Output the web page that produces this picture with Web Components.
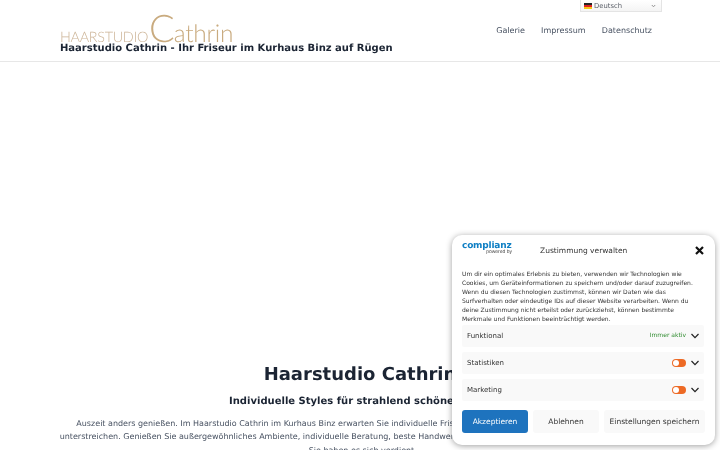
<!DOCTYPE html>
<html lang="de"><head><meta charset="utf-8"><title>Haarstudio Cathrin</title>
<style>
html,body{margin:0;padding:0;height:450px;overflow:hidden;background:#fff}
body{font-family:"DejaVu Sans",sans-serif;color:#1b2433;text-rendering:geometricPrecision}
</style></head><body>
<site-header></site-header>
<hero-section></hero-section>
<consent-banner>
  <consent-row label="Funktional" kind="always"></consent-row>
  <consent-row label="Statistiken" kind="toggle"></consent-row>
  <consent-row label="Marketing" kind="toggle"></consent-row>
</consent-banner>
<script>
function def(name,html){
  customElements.define(name,class extends HTMLElement{
    connectedCallback(){
      if(this.shadowRoot)return;
      const r=this.attachShadow({mode:'open'});
      r.innerHTML=typeof html==='function'?html(this):html;
    }
  });
}
def('site-logo',`<style>
:host{display:flex;align-items:baseline;height:29px;color:#c9ab7f;font-family:Lato,"Liberation Sans",sans-serif;font-weight:300;line-height:29px;white-space:nowrap}
.a{font-size:14.4px;letter-spacing:-.3px;color:#cdb598}
.c{font-size:38px;margin-left:1px;letter-spacing:-1px}
.b{font-size:24.5px;letter-spacing:-.3px}
</style><span class="a">HAARSTUDIO</span><span class="c">C</span><span class="b">athrin</span>`);
def('lang-switch',`<style>
:host{display:flex;align-items:center;box-sizing:border-box;width:82px;height:12px;padding:0 3px;background:linear-gradient(#fff,#f4f4f4);border:1px solid #e4e4e4;border-top:0;font-size:6.8px;color:#5a5f68;gap:2px}
svg{display:block}.s{margin-left:auto;margin-right:2px}
</style><svg width="8" height="6" viewBox="0 0 8 6"><rect width="8" height="2" fill="#222"/><rect y="2" width="8" height="2" fill="#d22"/><rect y="4" width="8" height="2" fill="#f5c518"/></svg><span>Deutsch</span><svg class="s" width="5" height="4" viewBox="0 0 5 4"><path d="M.8 1l1.7 1.8L4.2 1" fill="none" stroke="#888" stroke-width=".9"/></svg>`);
def('site-nav',`<style>
:host{display:flex;gap:16.2px;font-size:8px;line-height:11px;color:#475161;white-space:nowrap}
</style><span>Galerie</span><span>Impressum</span><span>Datenschutz</span>`);
def('site-header',`<style>
:host{display:block;box-sizing:border-box;height:62px;border-bottom:1px solid #e7e7e7;padding-left:60px;padding-right:68px;position:relative;filter:blur(.25px)}
.w{display:flex;justify-content:space-between;height:61px}
.brand{padding-top:14px}
.t{font-weight:700;font-size:10px;line-height:13px;color:#1b2433;white-space:nowrap;margin-top:-1px}
.r{display:flex;flex-direction:column;align-items:flex-end}
.r lang-switch{margin-right:-10px}
.r site-nav{margin-top:13px}
</style><div class="w"><div class="brand"><site-logo></site-logo><div class="t">Haarstudio Cathrin - Ihr Friseur im Kurhaus Binz auf Rügen</div></div>
<div class="r"><lang-switch></lang-switch><site-nav></site-nav></div></div>`);
def('hero-section',`<style>
:host{display:block;text-align:center;padding-top:301px;color:#1b2433;white-space:nowrap;filter:blur(.25px)}
h1{margin:0;font-size:18px;line-height:24px;font-weight:700}
h2{margin:6px 0 0;font-size:10px;line-height:18px;font-weight:700}
p{margin:6px 0 0;font-size:8px;line-height:13.4px;color:#475161}
</style><h1>Haarstudio Cathrin</h1><h2>Individuelle Styles für strahlend schöne Haare</h2>
<p>Auszeit anders genießen. Im Haarstudio Cathrin im Kurhaus Binz erwarten Sie individuelle Frisuren, die Ihre persönliche, natürliche Schönheit<br>unterstreichen. Genießen Sie außergewöhnliches Ambiente, individuelle Beratung, beste Handwerkskunst und exklusive, hochwertige Pflegeprodukte<br>- Sie haben es sich verdient.</p>`);
def('consent-row',h=>{
  const k=h.getAttribute('kind');
  const right=k==='always'?'<span class="a">Immer aktiv</span>':'<span class="t"></span>';
  return `<style>
:host{display:flex;align-items:center;height:22px;background:#f9f9f9;padding:0 5px;font-size:7px;color:#333;border-radius:2px}
.l{flex:1;filter:grayscale(1)}
.a{color:#2e8b2e;font-size:6px;margin-right:5px;position:relative;top:-1px;filter:opacity(.99)}
.t{width:14px;height:8px;border-radius:4px;background:#ed6a25;position:relative;margin-right:5px}
.t::after{content:"";position:absolute;left:1px;top:1px;width:6px;height:6px;border-radius:50%;background:#fff}
svg{display:block}
</style><span class="l">${h.getAttribute('label')}</span>${right}<svg width="8" height="6" viewBox="0 0 8 6"><path d="M.5 1l3.5 3.6L7.5 1" fill="none" stroke="#222" stroke-width="1.2"/></svg>`;
});
def('consent-btn',h=>`<style>
:host{display:flex;align-items:center;justify-content:center;height:23px;box-sizing:border-box;border-radius:3px;font-size:7.5px;white-space:nowrap;background:${h.hasAttribute('primary')?'#1e73be':'#f9f9f9'};color:${h.hasAttribute('primary')?'#fff':'#333'}}
</style><slot></slot>`);
def('consent-banner',`<style>
:host{position:absolute;left:452px;top:235px;width:263px;height:210px;box-sizing:border-box;background:#fff;border-radius:10px;box-shadow:0 1px 6px rgba(0,0,0,.38);padding:0 10px;color:#333;display:flex;flex-direction:column;filter:blur(.25px)}
.h{display:grid;grid-template-columns:78px 1fr auto;align-items:center;height:30px}
.logo{position:relative;line-height:1;color:#0f7fc4;font-weight:700;font-size:9px;letter-spacing:-.2px;height:16px;width:50px}
.logo small{position:absolute;right:0;top:8px;font-size:5px;font-weight:400;color:#444;font-family:"Liberation Sans",sans-serif;letter-spacing:0}
.ti{font-size:7.5px;color:#333}
.x{margin-right:1px;display:block}
.m{margin:0;font-size:6px;line-height:9px;color:#333;padding-top:5px;white-space:nowrap}
.rows{display:flex;flex-direction:column;gap:5px;margin:1px 1px 0 0}
.b{display:grid;grid-template-columns:66px 66px 101px;gap:5px;margin-top:9px}
</style>
<div class="h"><div class="logo">complianz<small>powered by</small></div><div class="ti">Zustimmung verwalten</div>
<svg class="x" width="9" height="9" viewBox="0 0 9 9"><path d="M1 1l7 7M8 1L1 8" stroke="#111" stroke-width="2.2"/></svg></div>
<p class="m">Um dir ein optimales Erlebnis zu bieten, verwenden wir Technologien wie<br>Cookies, um Geräteinformationen zu speichern und/oder darauf zuzugreifen.<br>Wenn du diesen Technologien zustimmst, können wir Daten wie das<br>Surfverhalten oder eindeutige IDs auf dieser Website verarbeiten. Wenn du<br>deine Zustimmung nicht erteilst oder zurückziehst, können bestimmte<br>Merkmale und Funktionen beeinträchtigt werden.</p>
<div class="rows"><slot></slot></div>
<div class="b"><consent-btn primary>Akzeptieren</consent-btn><consent-btn>Ablehnen</consent-btn><consent-btn>Einstellungen speichern</consent-btn></div>`);
</script>
</body></html>
